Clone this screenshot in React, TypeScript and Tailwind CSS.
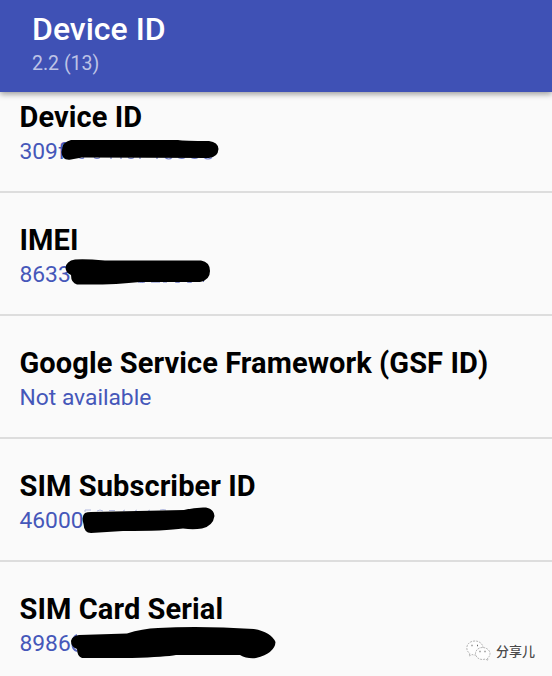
import type { ReactNode } from 'react';

interface DeviceEntry {
  label: string;
  value: string;
  mask?: ReactNode;
}

// Masks share the row's 552x121 coordinate space
const entries: DeviceEntry[] = [
  {
    label: 'Device ID',
    value: '309f',
    mask: (
      <>
        <path
          d="M79 87.500q3 2 5 0M94 87.500q3 2 6 0M111 87v2M121 87v2M128 87.500q3 2 6 0M140 87v2M157 87v2M165 87.500q4 3 7 0M178 87.500q4 2 7 0M191 87.500q4 2 7 0M204 87.500q4 3 8 0"
          fill="none"
          stroke="#6f7cc8"
          strokeWidth="1.2"
        />
        <path d="M62 80Q62 72 71 70L178 70Q184 71 209 71Q218 72 218.500 79Q218 87 209 88L82 87.500L71 89.500Q62 91 61.500 82Z" />
      </>
    ),
  },
  {
    label: 'IMEI',
    value: '8633',
    mask: (
      <>
        <path d="M138 89q4 1 7 0M151 89h9M163 89h4M175 89q3 1 5 0M187 89q3 1 5 0M204 88l-1 1" fill="none" stroke="#6f7cc8" strokeWidth="1" />
        <path d="M75 66.500Q84 65.500 105 67.500L201 67.500Q210 69 210 78Q210 87 200 89L140 89Q115 92 77 91.500Q71 90 71 82Q66 80 65.500 75Q66 68 75 66.500Z" />
      </>
    ),
  },
  { label: 'Google Service Framework (GSF ID)', value: 'Not available' },
  {
    label: 'SIM Subscriber ID',
    value: '46000',
    mask: (
      <>
        <path d="M85 73v-2h6M97 72q3-2 6 0M109 71.500h6M123 72l2-1M135 72l2-1M148 72l2-1M160 71q3-1 6 0" fill="none" stroke="#b3bae0" strokeWidth="1" />
        <path d="M91 73L184 71Q196 68 206 68.500Q214 70 214.500 77Q213 87 202 89.500Q193 91 183 89.500Q166 92 123 92L91 94Q84 94 83.500 85Q81 77 85 74Q87 73 91 73Z" />
      </>
    ),
  },
  {
    label: 'SIM Card Serial',
    value: '8986',
    mask: (
      <>
        <path d="M77 73Q72.500 75 72.500 82Q72.500 88 77 89" fill="none" stroke="#5968bf" strokeWidth="2" />
        <path d="M79 73L127 71.500Q142 66.500 158 66Q200 63.500 254 67Q271 70 275.500 80Q275 91 256 96Q247 97 240 93L176 93Q166 95 132 96L82 96Q77 94 77 87Q71 85 71 79Q72 74 79 73Z" />
      </>
    ),
  },
];

function EntryRow({ label, value, mask }: DeviceEntry) {
  return (
    <li className="relative h-[123px] border-b-2 border-[#dddddd] pt-[29px] pl-[19.5px]">
      <h2 className="text-[29px] leading-[36px] font-bold tracking-[0.09px] whitespace-nowrap text-black">{label}</h2>
      <p className="text-[22.8px] leading-[34px] whitespace-nowrap text-[#4557b9]">{value}</p>
      {mask && (
        <svg className="absolute top-0 left-0" width="552" height="121" viewBox="0 0 552 121">
          {mask}
        </svg>
      )}
    </li>
  );
}

function Watermark() {
  return (
    <div className="absolute top-[640px] left-[466px] flex items-center gap-[5px]">
      <svg width="25" height="22" viewBox="0 0 25 22" fill="#fefefe" stroke="#a3a3a3" strokeWidth="0.8" strokeDasharray="2 1">
        <path d="M9 1C4 1 .8 4.2.8 8c0 2.500 1.200 4.200 3 5.500L3 16l3-1.500c1 .4 2 .5 3.500.5C14 15 17 12 17 8S13.500 1 9 1Z" />
        <path d="M16.500 7.500c-4 0-7 2.700-7 6s3 6 7 6c1 0 2-.2 3-.5l2.500 1.500-.5-2.500c1.800-1.200 2.500-2.700 2.500-4.500 0-3.300-3.500-6-7.500-6Z" />
        <path d="M5.500 5.500h1M11 5.500h1M13.500 11.500h1M18.500 11.500h1" stroke="#666" strokeWidth="1.5" strokeDasharray="none" />
      </svg>
      <span className="font-['Noto_Sans_CJK_SC',sans-serif] text-[13px] leading-[20px] font-medium text-[#4a4a4a] [text-shadow:-1px_-1px_0_#fff]">
        分享儿
      </span>
    </div>
  );
}

export default function App() {
  return (
    <div className="relative h-[676px] w-[552px] overflow-hidden bg-[#fafafa] font-['Roboto',sans-serif]">
      <header className="relative z-10 h-[92px] bg-[#3f51b5] pt-[10px] pl-8 shadow-[0_2px_6px_rgba(0,0,0,0.4)]">
        <h1 className="text-[32px] leading-[38px] font-medium text-white">Device ID</h1>
        <p className="text-[19.5px] leading-[32px] text-[#bdc3e6]">2.2 (13)</p>
      </header>

      {/* The list is scrolled slightly under the app bar */}
      <ul className="-mt-[22px]">
        {entries.map((entry) => (
          <EntryRow key={entry.label} {...entry} />
        ))}
      </ul>

      <Watermark />
    </div>
  );
}
